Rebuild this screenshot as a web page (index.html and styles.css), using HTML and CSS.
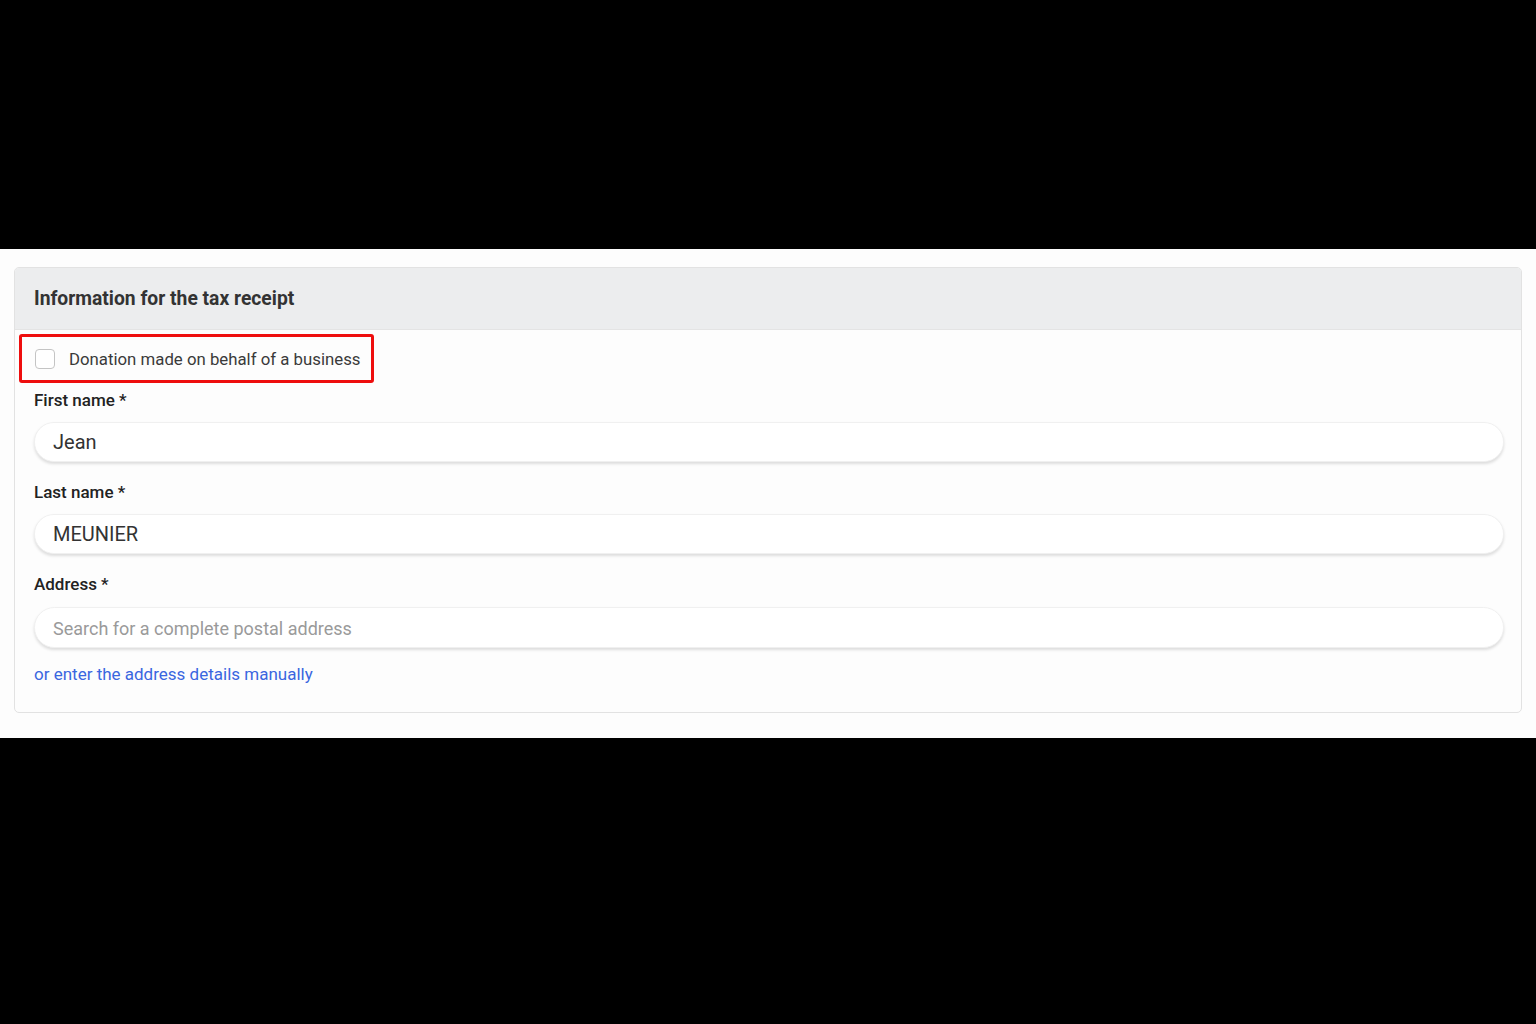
FILE: index.html
```html
<!DOCTYPE html>
<html lang="en">
<head>
<meta charset="utf-8">
<title>Information for the tax receipt</title>
<link rel="stylesheet" href="styles.css">
</head>
<body>
<div class="top-band"></div>
<main class="sheet">
  <section class="card">
    <header class="card-header">
      <h2 class="card-title">Information for the tax receipt</h2>
    </header>
    <div class="card-body">
      <label class="check-row highlight">
        <span class="checkbox"></span>
        <span class="check-label">Donation made on behalf of a business</span>
      </label>

      <div class="field">
        <div class="field-label">First name *</div>
        <div class="input">Jean</div>
      </div>

      <div class="field">
        <div class="field-label">Last name *</div>
        <div class="input">MEUNIER</div>
      </div>

      <div class="field field-address">
        <div class="field-label">Address *</div>
        <div class="input placeholder">Search for a complete postal address</div>
      </div>

      <a class="manual-link" href="#">or enter the address details manually</a>
    </div>
  </section>
</main>
</body>
</html>
```

FILE: styles.css
```css
* { box-sizing: border-box; }

html, body {
  margin: 0;
  padding: 0;
  background: #000;
  font-family: Roboto, "Liberation Sans", Arial, sans-serif;
}

.top-band {
  height: 249px;
}

.sheet {
  background: #fdfdfd;
  padding: 18px 14px 25px 14px;
}

.card {
  border: 1px solid #e2e2e2;
  border-radius: 5px;
  background: #fdfdfd;
  overflow: hidden;
}

.card-header {
  background: #ecedee;
  height: 62px;
  display: flex;
  align-items: center;
  padding-left: 19px;
  border-bottom: 1px solid #e4e4e4;
}

.card-title {
  margin: 0;
  font-size: 19.3px;
  font-weight: 700;
  color: #333;
}

.card-body {
  padding: 4px 18px 26px 19px;
  display: flex;
  flex-direction: column;
}

.check-row {
  display: flex;
  align-items: center;
  gap: 14px;
  height: 49px;
}

.highlight {
  margin-left: -15px;
  align-self: flex-start;
  border: 3px solid #ee0d0d;
  border-radius: 3px;
  padding: 0 11px 0 13px;
}

.checkbox {
  width: 20px;
  height: 20px;
  border: 1.5px solid #c4c4c4;
  border-radius: 4px;
  background: #fff;
}

.check-label {
  font-size: 16.8px;
  color: #3a3a3a;
}

.field {
  display: flex;
  flex-direction: column;
  gap: 10px;
  margin-top: 5px;
}

.field + .field {
  margin-top: 18px;
}

.field-address .input {
  margin-top: 1px;
}

.field-label {
  font-size: 17px;
  font-weight: 500;
  line-height: 24px;
  color: #222;
}

.input {
  height: 40px;
  border: 1px solid #f0f0f0;
  border-radius: 20px;
  background: #fff;
  box-shadow: 0 2px 3px rgba(0, 0, 0, 0.13);
  display: flex;
  align-items: center;
  padding-left: 18px;
  font-size: 20px;
  color: #333;
  margin-right: -1px;
}

.input.placeholder {
  height: 41px;
  border-radius: 21px;
  padding-top: 2px;
  font-size: 18px;
  color: #9a9a9a;
}

.manual-link {
  margin-top: 14px;
  font-size: 17px;
  line-height: 24px;
  color: #3a66e0;
  text-decoration: none;
}
```
